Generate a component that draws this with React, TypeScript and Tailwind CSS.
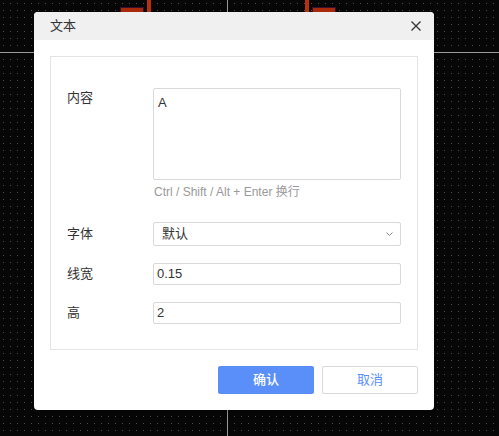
const font = "font-['Liberation_Sans','Noto_Sans_CJK_SC',sans-serif]";

function Canvas() {
  return (
    <svg className="absolute inset-0" width="499" height="436">
      <defs>
        <pattern id="dots" width="7" height="7" patternUnits="userSpaceOnUse">
          <rect x="3" y="3" width="1" height="1" fill="#4d4d4d" />
        </pattern>
      </defs>
      <rect width="499" height="436" fill="#070707" />
      <rect width="499" height="436" fill="url(#dots)" />
      <rect x="0" y="52" width="499" height="1" fill="#9a9a9a" />
      <rect x="227" y="0" width="1" height="436" fill="#9a9a9a" />
      {/* pads peeking above the dialog */}
      <rect x="120.5" y="7.5" width="23" height="10" fill="#a82a0a" stroke="#3a1030" />
      <rect x="147" y="0" width="4" height="14" fill="#b8300c" />
      <rect x="305" y="0" width="4" height="14" fill="#b8300c" />
      <rect x="312.5" y="7.5" width="23" height="10" fill="#a82a0a" stroke="#3a1030" />
    </svg>
  );
}

function Row({ label, children }: { label: string; children: React.ReactNode }) {
  return (
    <div className="flex items-center">
      <div className="w-[86px] text-[13px] text-[#333]">{label}</div>
      {children}
    </div>
  );
}

export default function App() {
  return (
    <div className={`relative h-[436px] w-[499px] overflow-hidden ${font}`}>
      <Canvas />

      <div className="absolute left-[34px] top-[12px] w-[400px] overflow-hidden rounded-[4px] bg-white shadow-md">
        {/* Header */}
        <div className="flex h-[28px] items-center justify-between bg-[#f0f0f0] pl-4 pr-[13px]">
          <span className="text-[13px] text-[#333]">文本</span>
          <svg width="10" height="10" viewBox="0 0 10 10">
            <path d="M0.5 0.5 L9.5 9.5 M9.5 0.5 L0.5 9.5" stroke="#333" strokeWidth="1.3" />
          </svg>
        </div>

        <div className="px-4 pt-4 pb-4">
          <div className="border border-[#e4e4e4] px-4 pt-[31px] pb-[25px]">
            {/* Content */}
            <div className="flex">
              <div className="w-[86px] pt-[1px] text-[13px] leading-[18px] text-[#333]">内容</div>
              <div className="flex flex-col">
                <div className="h-[92px] w-[248px] rounded-[2px] border border-[#d9d9d9] pl-[4px] pt-[5px] text-[13px] leading-[18px] text-[#333]">
                  A
                </div>
                <div className="mt-[3px] pl-[1px] text-[12px] leading-[18px] text-[#999]">
                  Ctrl / Shift / Alt + Enter 换行
                </div>
              </div>
            </div>

            <div className="mt-[21px] flex flex-col gap-[17px]">
              <Row label="字体">
                <div className="flex h-[24px] w-[248px] items-center justify-between rounded-[2px] border border-[#d9d9d9] pl-[8px] pr-[7px] text-[13px] text-[#333]">
                  <span>默认</span>
                  <svg width="7" height="4" viewBox="0 0 7 4">
                    <path d="M0.5 0.5 L3.5 3.5 L6.5 0.5" fill="none" stroke="#888" strokeWidth="1" />
                  </svg>
                </div>
              </Row>
              <Row label="线宽">
                <div className="flex h-[22px] w-[248px] items-center rounded-[2px] border border-[#d9d9d9] px-[3px] text-[13px] text-[#333]">
                  0.15
                </div>
              </Row>
              <Row label="高">
                <div className="flex h-[22px] w-[248px] items-center rounded-[2px] border border-[#d9d9d9] px-[3px] text-[13px] text-[#333]">
                  2
                </div>
              </Row>
            </div>
          </div>

          {/* Footer */}
          <div className="mt-[16px] flex justify-end gap-[8px]">
            <button className="h-[28px] w-[96px] rounded-[2px] bg-[#5a8ff9] text-[13px] font-medium text-white">确认</button>
            <button className="h-[28px] w-[96px] rounded-[2px] border border-[#d9d9d9] bg-white text-[13px] text-[#5a8ff9]">
              取消
            </button>
          </div>
        </div>
      </div>
    </div>
  );
}
